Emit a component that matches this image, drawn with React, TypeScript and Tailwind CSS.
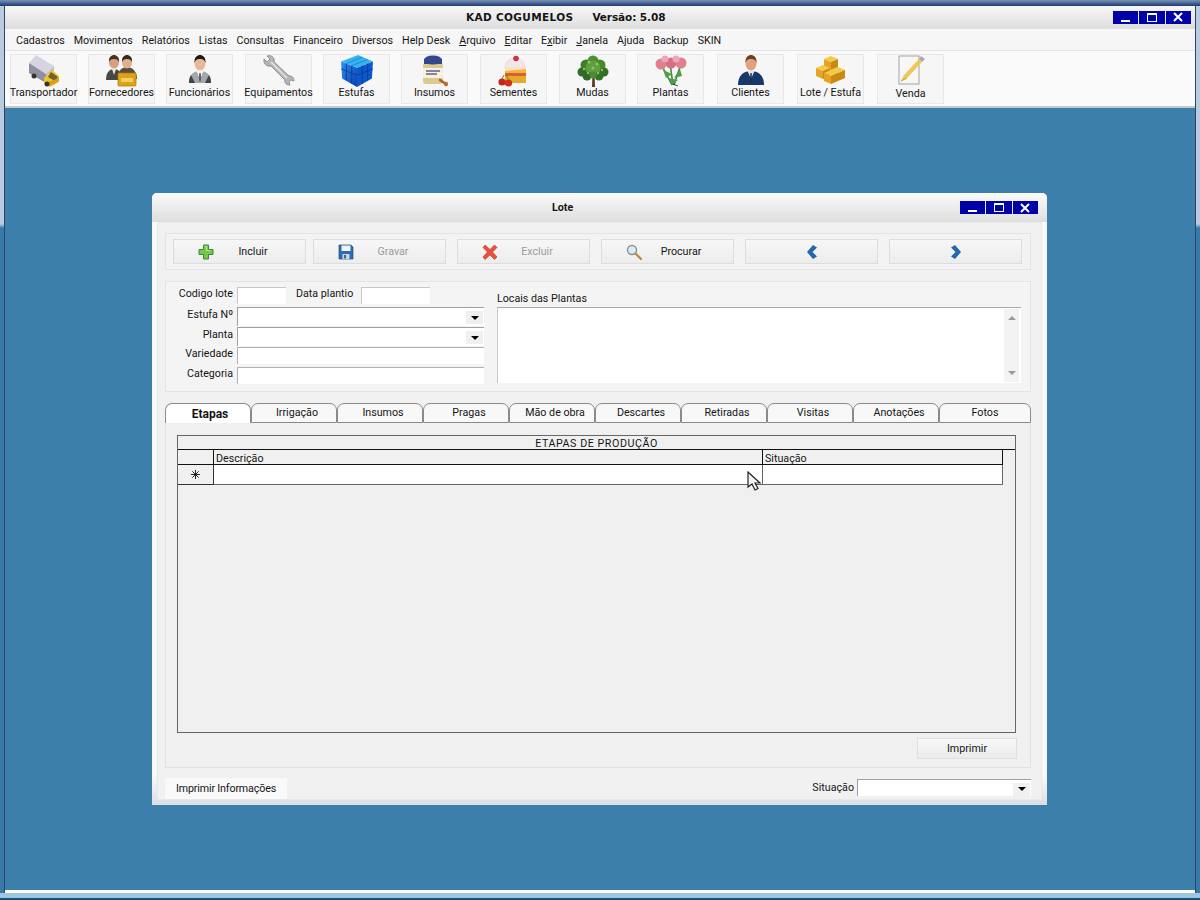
const Truck = () => (
  <svg width="32" height="32" viewBox="0 0 32 32">
    <polygon points="1,8 8,0 26,11 18,19" fill="#d5d5e2" />
    <polygon points="1,8 18,19 18,28 1,18" fill="#8f8fa2" />
    <polygon points="18,19 26,11 26,16 18,24" fill="#bdbdcc" />
    <polygon points="16,23 24,15 31,21 31,27 22,32 16,28" fill="#f0c22c" />
    <polygon points="23,17 30,22 27,26 20,22" fill="#6d6330" />
    <polygon points="20,27 31,23 31,26 22,31" fill="#d99f16" />
    <circle cx="6" cy="21" r="2.500" fill="#333" />
    <circle cx="19" cy="29" r="2.500" fill="#333" />
  </svg>
);

const People = () => (
  <svg width="32" height="32" viewBox="0 0 32 32">
    <path d="M0 25c0-7 3-11 8-11s8 4 8 11z" fill="#4a4642" />
    <polygon points="6,14 10,14 8,20" fill="#e8e8e8" />
    <ellipse cx="8" cy="7.500" rx="5" ry="6" fill="#d99f7e" />
    <path d="M3 7c-.5-5 2.500-7 5-7s5.500 2 5 7c-1-2-2-3-5-3S4 5 3 7z" fill="#4a2f20" />
    <path d="M11 24c0-7 4-12 10-12s10 5 10 12z" fill="#5e4c3a" />
    <ellipse cx="21" cy="7.500" rx="5" ry="6" fill="#e3ad8c" />
    <path d="M16 7c-.5-5 2.500-7 5-7s5.500 2 5 7c-1-2-2-3-5-3s-4 1-5 3z" fill="#38261a" />
    <rect x="12" y="18" width="18" height="13" rx="1" fill="#dca31a" stroke="#a87a10" strokeWidth=".7" />
    <rect x="15" y="23" width="12" height="4" fill="#f3cd5e" />
  </svg>
);

const Employee = () => (
  <svg width="32" height="32" viewBox="0 0 32 32">
    <path d="M5 28c0-8 4-12 11-12s11 4 11 12z" fill="#a2a8ad" />
    <polygon points="12.500,16 19.500,16 16,24" fill="#f3f3f3" />
    <polygon points="15.300,18 16.700,18 17,25 16,27 15,25" fill="#555" />
    <ellipse cx="16" cy="8.500" rx="5.500" ry="7" fill="#eab899" />
    <path d="M10.500 8c-.5-6 3-8 5.500-8s6 2 5.500 8c-1-3-2-4-5.500-4s-4.500 1-5.500 4z" fill="#1f1a18" />
    <path d="M5 28c0-3 .5-6 2-8l4 8zM27 28c0-3-.5-6-2-8l-4 8z" fill="#3f4448" />
  </svg>
);

const Wrench = () => (
  <svg width="32" height="32" viewBox="0 0 32 32">
    <path d="M4 1c3-1 6 0 7 3 .4 1 .4 2 .2 3L26 21c3-.6 5 2 5 5l-3-1-2 2 1 3c-3 .5-6-2-5-5L8 11C5 12 2 10 1 7c-.3-1 0-2 0-3l3 3 3-3z" fill="#b5b5b8" stroke="#77777c" strokeWidth=".7" />
    <path d="M8 7l16 16" stroke="#e6e6e8" strokeWidth="1.500" />
  </svg>
);

const Cube = () => (
  <svg width="34" height="34" viewBox="0 0 32 32">
    <defs>
      <linearGradient id="cube-left" x1="0" y1="0" x2="1" y2="1">
        <stop offset="0" stopColor="#2a8ff0" />
        <stop offset="1" stopColor="#0b3fb0" />
      </linearGradient>
    </defs>
    <polygon points="1,7 16,13 16,31 2,23" fill="url(#cube-left)" />
    <polygon points="16,13 31,7 30,23 16,31" fill="#0e57c8" />
    <polygon points="1,7 17,1 31,7 16,13" fill="#35b3ee" />
    <path d="M6 9v16M11 11v17M21 11v17M26 9v16M1 14l15 6 15-6" stroke="#063a97" strokeWidth=".8" fill="none" />
    <path d="M6 9l15-6M11 11l15-6" stroke="#1784cf" strokeWidth=".8" />
  </svg>
);

const Jar = () => (
  <svg width="32" height="32" viewBox="0 0 32 32">
    <rect x="4" y="8" width="20" height="21" rx="3" fill="#dcc98e" />
    <ellipse cx="14" cy="5" rx="9" ry="4.500" fill="#34488f" />
    <rect x="5" y="4" width="18" height="5" fill="#34488f" />
    <rect x="4" y="13" width="20" height="10" fill="#f4f1e2" />
    <path d="M7 16h14M7 19h11" stroke="#6a5a94" strokeWidth="1.300" />
    <path d="M21 25l6 4" stroke="#a8602e" strokeWidth="2.500" strokeLinecap="round" />
    <circle cx="27" cy="29" r="2.200" fill="#b96f3a" />
  </svg>
);

const Cake = () => (
  <svg width="32" height="32" viewBox="0 0 32 32">
    <path d="M7 11c1-5 5-8 10-8s9 3 10 8v3H7z" fill="#f3e6ea" stroke="#ddc9cf" strokeWidth=".5" />
    <circle cx="18" cy="3.500" r="2.800" fill="#cf3146" />
    <rect x="7" y="12" width="21" height="6" fill="#f2b63c" />
    <rect x="7" y="18" width="21" height="3" fill="#d9602c" />
    <rect x="7" y="21" width="21" height="7" fill="#e9a92f" />
    <polygon points="7,12 28,12 28,14 7,16" fill="#f6e3c2" />
    <circle cx="4" cy="27" r="3.600" fill="#c4241c" />
    <circle cx="10.500" cy="28" r="3.600" fill="#d1301f" />
    <path d="M4 24l2-4M11 25l-3-5" stroke="#4d8a2a" strokeWidth="1" />
  </svg>
);

const Tree = () => (
  <svg width="32" height="32" viewBox="0 0 32 32">
    <path d="M15 32l.5-14h2l.5 14z" fill="#5a3c20" />
    <circle cx="16" cy="6" r="5.500" fill="#4f8e34" />
    <circle cx="9" cy="10" r="5.500" fill="#3f7f2a" />
    <circle cx="23" cy="10" r="5.500" fill="#468a2c" />
    <circle cx="5" cy="17" r="4.500" fill="#2f6c26" />
    <circle cx="27" cy="17" r="4.500" fill="#336f27" />
    <circle cx="16" cy="13" r="7.500" fill="#5f9e3e" />
    <circle cx="10" cy="21" r="4.500" fill="#2f6a28" />
    <circle cx="22" cy="21" r="4.500" fill="#357428" />
    <circle cx="16" cy="20" r="3.500" fill="#4c8a34" />
    <g fill="#8cc562">
      <circle cx="12" cy="7" r="1.500" />
      <circle cx="20" cy="9" r="1.500" />
      <circle cx="7" cy="14" r="1.200" />
      <circle cx="16" cy="13" r="1.500" />
      <circle cx="25" cy="15" r="1.200" />
      <circle cx="11" cy="18" r="1.200" />
      <circle cx="21" cy="18" r="1.200" />
    </g>
  </svg>
);

const Flowers = () => (
  <svg width="32" height="32" viewBox="0 0 32 32">
    <path d="M6 9l11 21M15 8l3 22M26 9l-7 21" stroke="#3f8a3c" strokeWidth="1.600" />
    <path d="M8 15l9 4-6 4zM25 14l-6 9 8-2zM14 23l9 2-6 5z" fill="#4f9e48" />
    <circle cx="6" cy="9" r="5.500" fill="#e0808f" />
    <circle cx="16" cy="8" r="5.500" fill="#d56f84" />
    <circle cx="26" cy="8" r="5.500" fill="#e0808f" />
    <circle cx="10" cy="4" r="3.500" fill="#eea6b4" />
    <circle cx="21" cy="4" r="3.500" fill="#eea6b4" />
    <path d="M18 29l5 2" stroke="#222" strokeWidth=".8" />
  </svg>
);

const Client = () => (
  <svg width="32" height="32" viewBox="0 0 32 32">
    <path d="M3 30c0-9 5-14 13-14s13 5 13 14z" fill="#16386a" />
    <polygon points="12.500,16 19.500,16 16,24" fill="#dfe8f2" />
    <polygon points="15.300,18 16.700,18 17,26 16,28 15,26" fill="#2b2b4a" />
    <ellipse cx="16" cy="8.500" rx="5.500" ry="7" fill="#dfa27e" />
    <path d="M10.500 8c-.5-6 3-8 5.500-8s6 2 5.500 8c-1-3-2-4-5.500-4s-4.500 1-5.500 4z" fill="#6a4126" />
  </svg>
);

const Box = ({ x, y }: { x: number; y: number }) => (
  <g transform={`translate(${x} ${y})`}>
    <polygon points="0,3 7,0 14,3 7,6" fill="#f5c94a" />
    <polygon points="0,3 7,6 7,14 0,11" fill="#e5a51e" />
    <polygon points="7,6 14,3 14,11 7,14" fill="#c98a12" />
  </g>
);

const Boxes = () => (
  <svg width="32" height="32" viewBox="0 0 32 32">
    <Box x={9} y={1} />
    <Box x={1} y={10} />
    <Box x={16} y={12} />
    <Box x={9} y={15} />
  </svg>
);

const Note = () => (
  <svg width="32" height="32" viewBox="0 0 32 32">
    <rect x="4" y="1" width="20" height="28" fill="#f7f7f4" stroke="#8f8f94" strokeWidth=".8" />
    <polygon points="6,26 9,20 24,4 27,7 12,23" fill="#ecc858" />
    <polygon points="24,4 26,1 30,4 27,7" fill="#a9a9ad" />
    <path d="M6 26l6-3" stroke="#c59c2c" strokeWidth="1" />
  </svg>
);

const Plus = () => (
  <svg width="16" height="16" viewBox="0 0 16 16">
    <path d="M5.500 1h5v4.500H15v5h-4.500V15h-5v-4.500H1v-5h4.500z" fill="#72c84a" stroke="#3d8a34" strokeWidth="1" />
    <path d="M6.500 2.500h2v4h4" stroke="#b5ea92" strokeWidth="1" fill="none" />
  </svg>
);

const Floppy = () => (
  <svg width="16" height="16" viewBox="0 0 16 16">
    <path d="M1 1h12l2 2v12H1z" fill="#2f6cae" stroke="#23507f" strokeWidth=".7" />
    <rect x="3.500" y="1.500" width="9" height="5.500" fill="#eef3f8" />
    <rect x="4.500" y="10" width="7" height="5" fill="#c7d5e3" />
    <rect x="6" y="11" width="2" height="3.500" fill="#2f6cae" />
  </svg>
);

const Cross = () => (
  <svg width="16" height="16" viewBox="0 0 16 16">
    <path d="M3 1l5 4.500L12.500 1 15 3.500 10.500 8l4.500 5-2.500 2.500L8 11l-5 4.500L1 13l4.500-5L1 3.500z" fill="#e8523c" stroke="#b5351f" strokeWidth=".6" />
  </svg>
);

const Lens = () => (
  <svg width="16" height="16" viewBox="0 0 16 16">
    <circle cx="6" cy="6" r="4.500" fill="#d9ecf7" stroke="#8a8f94" strokeWidth="1.400" />
    <path d="M9.500 9.500L15 15" stroke="#b98a3e" strokeWidth="2.200" strokeLinecap="round" />
  </svg>
);

const ChevronLeft = () => (
  <svg width="12" height="14" viewBox="0 0 12 14">
    <polygon points="7,0 11,2.500 6.500,7 11,11.500 7,14 1,7" fill="#2467ad" />
  </svg>
);

const ChevronRight = () => (
  <svg width="12" height="14" viewBox="0 0 12 14">
    <polygon points="5,0 1,2.500 5.500,7 1,11.500 5,14 11,7" fill="#2467ad" />
  </svg>
);

const WindowButtons = () => (
  <div className="flex h-[13px] w-[78px] gap-px">
    <div className="flex flex-1 items-end justify-center bg-[#0000a8] pb-[2px]">
      <div className="h-[2px] w-[9px] bg-white" />
    </div>
    <div className="flex flex-1 items-center justify-center bg-[#0000a8]">
      <div className="h-[9px] w-[10px] border border-t-2 border-white" />
    </div>
    <div className="flex flex-1 items-center justify-center bg-[#0000a8]">
      <svg width="10" height="10" viewBox="0 0 10 10">
        <path d="M1 1l8 8M9 1l-8 8" stroke="#fff" strokeWidth="2" />
      </svg>
    </div>
  </div>
);

const menus = [
  { label: "Cadastros", className: "ml-0" },
  { label: "Movimentos", className: "ml-[9px]" },
  { label: "Relatórios", className: "ml-[9px]" },
  { label: "Listas", className: "ml-[9px]" },
  { label: "Consultas", className: "ml-[9px]" },
  { label: "Financeiro", className: "ml-[9px]" },
  { label: "Diversos", className: "ml-[9px]" },
  { label: "Help Desk", className: "ml-[9px]" },
  { label: "Arquivo", first: true, className: "ml-[9px]" },
  { label: "Editar", first: true, className: "ml-[9px]" },
  { label: "Exibir", under: 1, className: "ml-[9px]" },
  { label: "Janela", first: true, className: "ml-[9px]" },
  { label: "Ajuda", className: "ml-[9px]" },
  { label: "Backup", className: "ml-[9px]" },
  { label: "SKIN", className: "ml-[9px]" },
];

const tools = [
  { label: "Transportador", icon: <Truck />, className: "ml-[5px]" },
  { label: "Fornecedores", icon: <People />, className: "ml-[11px]" },
  { label: "Funcionários", icon: <Employee />, className: "ml-[11px]" },
  { label: "Equipamentos", icon: <Wrench />, className: "ml-[12px]" },
  { label: "Estufas", icon: <Cube />, className: "ml-[11px]" },
  { label: "Insumos", icon: <Jar />, className: "ml-[11px]" },
  { label: "Sementes", icon: <Cake />, className: "ml-[12px]" },
  { label: "Mudas", icon: <Tree />, className: "ml-[12px]" },
  { label: "Plantas", icon: <Flowers />, className: "ml-[11px]" },
  { label: "Clientes", icon: <Client />, className: "ml-[13px]" },
  { label: "Lote / Estufa", icon: <Boxes />, className: "ml-[13px]" },
  { label: "Venda", icon: <Note />, className: "ml-[13px]", low: true },
];

const actions = [
  { label: "Incluir", icon: <Plus />, className: "ml-0" },
  { label: "Gravar", icon: <Floppy />, off: true, className: "ml-[7px]" },
  { label: "Excluir", icon: <Cross />, off: true, className: "ml-[11px]" },
  { label: "Procurar", icon: <Lens />, className: "ml-[11px]" },
];

const tabs = ["Irrigação", "Insumos", "Pragas", "Mão de obra", "Descartes", "Retiradas", "Visitas", "Anotações"];

const btn = "h-[25px] w-[133px] border border-[#dddddd] bg-gradient-to-b from-[#f7f7f7] to-[#ececec]";

const Combo = () => (
  <div className="flex h-[19px] w-[247px] items-end justify-end border-t border-l border-t-[#a0a0a0] border-l-[#a0a0a0] bg-white">
    <div className="mr-px mb-[2px] flex h-[13px] w-[17px] items-center justify-center bg-[#f0f0f0]">
      <div className="h-0 w-0 border-x-[4px] border-t-[4px] border-x-transparent border-t-black" />
    </div>
  </div>
);

const FieldRow = ({ label, className, children }: { label: string; className: string; children: React.ReactNode }) => (
  <div className={`flex items-center ${className}`}>
    <span className="w-[71px] pr-[4px] pb-[2px] text-right">{label}</span>
    {children}
  </div>
);

export default function App() {
  return (
    <div className="flex h-[900px] w-[1200px] flex-col overflow-hidden bg-[linear-gradient(to_bottom,#b9cbde_224px,#3a78a8_228px,#3a78a8_893px,#9cc8e4_893px,#9cc8e4_898px,#1f4f78_898px)] px-[4px] pb-[7px] font-['Roboto',sans-serif] text-[10.7px] leading-none text-[#151515]">
      <div className="-mx-[4px] h-[6px] shrink-0 bg-gradient-to-b from-[#7a93b5] to-[#1c3a70]" />
      <div className="flex flex-1 flex-col border-x border-[#2b4468]">
        <div className="flex h-[23px] shrink-0 items-center bg-gradient-to-b from-[#f7f7f7] to-[#dddddd] pl-[461px]">
          <span className="font-['DejaVu_Sans',sans-serif] text-[10.5px] font-bold tracking-[.35px]">KAD COGUMELOS</span>
          <span className="ml-[19px] font-['DejaVu_Sans',sans-serif] text-[10.5px] font-bold tracking-[-.1px]">Versão: 5.08</span>
          <div className="mt-[-1px] ml-auto mr-[4px]">
            <WindowButtons />
          </div>
        </div>
        <nav className="flex h-[21px] shrink-0 items-center bg-[#f6f6f6] pt-[3px] pl-[11px]">
          {menus.map((m) => (
            <span key={m.label} className={m.className}>
              {m.first ? (
                <>
                  <u>{m.label[0]}</u>
                  {m.label.slice(1)}
                </>
              ) : m.under ? (
                <>
                  {m.label[0]}
                  <u>{m.label[1]}</u>
                  {m.label.slice(2)}
                </>
              ) : (
                m.label
              )}
            </span>
          ))}
        </nav>
        <div className="flex h-[58px] shrink-0 items-start border-t border-b-2 border-t-[#e4e4e4] border-b-[#c4c8cc] bg-[#fafafa] pt-[3px]">
          {tools.map((t) => (
            <div
              key={t.label}
              className={`flex h-[50px] w-[67px] flex-col items-center border border-[#e8e8e8] bg-[#f6f6f6] ${t.className}`}
            >
              <div className="flex h-[32px] items-center">{t.icon}</div>
              <span className={`whitespace-nowrap ${t.low ? "mt-[2px]" : "mt-[1px]"}`}>{t.label}</span>
            </div>
          ))}
        </div>

        <main className="flex-1 bg-[#3d7fab] pt-[85px] pl-[147px]">
          <div className="flex h-[612px] w-[895px] flex-col rounded-t-[5px] bg-gradient-to-b from-[#f7f9fa] from-[95%] to-[#dcdfe2]">
            <div className="flex h-[29px] shrink-0 items-center rounded-t-[5px] bg-gradient-to-b from-[#fbfbfb] to-[#dedede] pl-[400px]">
              <span className="pt-[2px] font-bold">Lote</span>
              <div className="ml-auto mr-[9px]">
                <WindowButtons />
              </div>
            </div>

            <div className="mx-[5px] mb-[7px] flex flex-1 flex-col border border-[#e8e8e8] bg-[#f1f1f1] pt-[10px] pl-[7px]">
              <div className="flex h-[37px] w-[866px] shrink-0 items-center border border-[#e4e4e4] bg-[#f3f3f3] pl-[7px]">
                {actions.map((a) => (
                  <div key={a.label} className={`flex items-center pl-[24px] ${btn} ${a.className}`}>
                    {a.icon}
                    <span className={`w-[78px] pt-[1px] text-center ${a.off ? "text-[#9c9c9c]" : ""}`}>{a.label}</span>
                  </div>
                ))}
                <div className={`ml-[11px] flex items-center justify-center ${btn}`}>
                  <ChevronLeft />
                </div>
                <div className={`ml-[11px] flex items-center justify-center ${btn}`}>
                  <ChevronRight />
                </div>
              </div>

              <div className="mt-[11px] flex h-[111px] w-[866px] shrink-0 border border-[#e4e4e4] bg-[#f4f4f4] pt-[5px]">
                <div className="flex w-[331px] flex-col">
                  <FieldRow label="Codigo lote" className="h-[17px]">
                    <div className="h-[17px] w-[49px] border-t border-l border-[#c8c8c8] bg-white" />
                    <span className="ml-[10px] w-[65px] pb-[2px]">Data plantio</span>
                    <div className="h-[17px] w-[69px] border-t border-l border-[#c8c8c8] bg-white" />
                  </FieldRow>
                  <FieldRow label="Estufa Nº" className="mt-[3px] h-[19px]">
                    <Combo />
                  </FieldRow>
                  <FieldRow label="Planta" className="mt-px h-[19px]">
                    <Combo />
                  </FieldRow>
                  <FieldRow label="Variedade" className="mt-px h-[17px]">
                    <div className="h-[17px] w-[247px] border-t border-l border-[#b0b0b0] bg-white" />
                  </FieldRow>
                  <FieldRow label="Categoria" className="mt-[3px] h-[17px]">
                    <div className="h-[17px] w-[247px] border-t border-l border-[#b0b0b0] bg-white" />
                  </FieldRow>
                </div>
                <div className="flex flex-col">
                  <span className="mt-[7px] h-[13px]">Locais das Plantas</span>
                  <div className="flex h-[76px] w-[524px] justify-end border-t border-l border-t-[#a8a8a8] border-l-[#c8c8c8] bg-white pt-[1px] pr-[2px]">
                    <div className="flex h-[73px] w-[15px] flex-col items-center justify-between bg-[#f3f3f3] py-[7px]">
                      <div className="h-0 w-0 border-x-[4px] border-b-[4px] border-x-transparent border-b-[#9a9a9a]" />
                      <div className="h-0 w-0 border-x-[4px] border-t-[4px] border-x-transparent border-t-[#9a9a9a]" />
                    </div>
                  </div>
                </div>
              </div>

              <div className="mt-[11px] flex h-[20px] w-[866px] shrink-0">
                <div className="flex w-[86px] items-center justify-center rounded-t-[7px] border border-b-0 border-[#8a8a8a] bg-white pt-[1px] pl-[4px] text-[12px] font-bold">
                  Etapas
                </div>
                {tabs.map((t) => (
                  <div key={t} className="flex w-[86px] items-center justify-center rounded-t-[7px] border border-[#8a8a8a] bg-[#f8f8f8] pt-[1px] pl-[6px]">
                    {t}
                  </div>
                ))}
                <div className="flex w-[92px] items-center justify-center rounded-t-[7px] border border-[#8a8a8a] bg-[#f8f8f8] pt-[1px]">
                  Fotos
                </div>
              </div>

              <div className="flex h-[345px] w-[866px] shrink-0 flex-col border-x border-b border-[#e2e2e2] bg-[#f0f0f0] pt-[12px] pl-[11px]">
                <div className="flex h-[298px] w-[839px] flex-col border border-[#666666] bg-[#f0f0f0]">
                  <div className="h-[14px] shrink-0 border-b border-[#111] text-center leading-[15px] tracking-[.55px]">ETAPAS DE PRODUÇÃO</div>
                  <div className="flex h-[15px] shrink-0">
                    <div className="w-[36px] border-r border-b border-[#111]" />
                    <div className="w-[549px] border-r border-b border-[#111] pl-[2px] leading-[17px]">Descrição</div>
                    <div className="w-[240px] border-r border-b border-[#111] pl-[2px] leading-[17px]">Situação</div>
                  </div>
                  <div className="flex h-[20px] shrink-0">
                    <div className="flex w-[36px] items-center justify-center border-r border-b border-[#333]">
                      <svg width="9" height="9" viewBox="0 0 9 9">
                        <path d="M4.500 0v9M0 4.500h9M1.300 1.300l6.400 6.400M7.700 1.300L1.300 7.700" stroke="#111" strokeWidth=".9" />
                      </svg>
                    </div>
                    <div className="relative w-[549px] border-r border-b border-[#666] bg-white">
                      <svg className="absolute top-[6px] left-[533px]" width="14" height="20" viewBox="0 0 14 20">
                        <path d="M1 1v15l4-3 3 6 3-1.500-3-5.500h5z" fill="#f4f4f4" stroke="#222" strokeWidth="1.200" />
                      </svg>
                    </div>
                    <div className="w-[240px] border-r border-b border-[#666] bg-white" />
                  </div>
                </div>
                <div className="mt-[5px] ml-[740px] flex h-[21px] w-[100px] items-center justify-center border border-[#e0e0e0] bg-gradient-to-b from-[#f8f8f8] to-[#ebebeb] pt-[1px]">
                  Imprimir
                </div>
              </div>

              <div className="mt-[10px] flex h-[21px] w-[866px] items-center">
                <div className="flex h-[21px] w-[122px] items-center justify-center bg-[#f9f9f9] pt-[2px] tracking-[-.15px]">Imprimir Informações</div>
                <span className="ml-auto mr-[3px] pb-[1px]">Situação</span>
                <div className="mb-[3px] flex h-[17px] w-[174px] items-end justify-end border-t border-l border-[#a0a0a0] bg-white">
                  <div className="mr-px flex h-[13px] w-[17px] items-center justify-center bg-[#f0f0f0]">
                    <div className="h-0 w-0 border-x-[4px] border-t-[4px] border-x-transparent border-t-black" />
                  </div>
                </div>
              </div>
            </div>
          </div>
        </main>
        <div className="h-[3px] shrink-0 bg-white" />
      </div>
    </div>
  );
}
